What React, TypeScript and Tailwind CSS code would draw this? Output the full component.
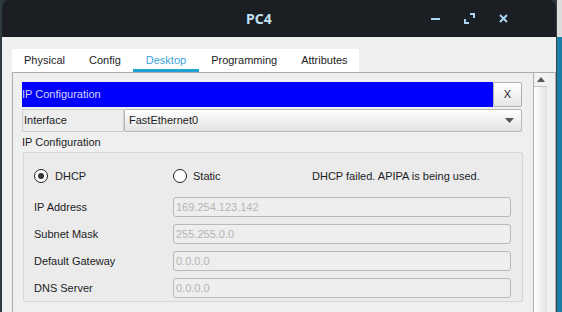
import React from "react";

const font = { fontFamily: '"Liberation Sans", Arial, sans-serif' };

function Radio({ checked }: { checked?: boolean }) {
  return (
    <span className="flex h-[14px] w-[14px] items-center justify-center rounded-full border-[1.5px] border-[#222] bg-white">
      {checked && <span className="h-[6px] w-[6px] rounded-full bg-[#333]" />}
    </span>
  );
}

function Field({ label, value }: { label: string; value: string }) {
  return (
    <div className="flex h-[20px] items-center">
      <div className="w-[149px] pl-[10px] text-[11px] text-[#1c1c24]">{label}</div>
      <div className="flex h-[20px] w-[338px] items-center rounded-[3px] border border-[#b9b9b9] bg-[#eeeeee] pl-[2px] text-[11px] text-[#b5b5b5]">
        {value}
      </div>
    </div>
  );
}

export default function App() {
  const tabs = ["Physical", "Config", "Desktop", "Programming", "Attributes"];
  return (
    <div className="flex h-[312px] w-[562px] overflow-hidden bg-[#2b3439]" style={font}>
      <div className="w-[2px] bg-[#2f3b41]" />
      <div className="flex w-[554px] flex-col">
        {/* title bar */}
        <div className="flex h-[37px] items-center rounded-tl-[8px] rounded-tr-[8px] bg-[#1b1f23]">
          <div
            className="ml-[244px] text-[14px] font-bold text-[#c2e0f4]"
            style={{ fontFamily: '"Noto Sans", "Liberation Sans", sans-serif' }}
          >
            PC4
          </div>
          <div className="ml-[159px] h-[2px] w-[9px] bg-[#a9d6f2]" />
          <svg className="ml-[24px]" width="11" height="11" viewBox="0 0 11 11" fill="none" stroke="#a9d6f2" strokeWidth="2">
            <path d="M6 1h4v4" />
            <path d="M1 6v4h4" />
          </svg>
          <svg className="ml-[24px]" width="9" height="9" viewBox="0 0 9 9" fill="none" stroke="#a9d6f2" strokeWidth="2">
            <path d="M1 1l7 7M8 1l-7 7" />
          </svg>
        </div>
        {/* body */}
        <div className="flex flex-1 flex-col bg-[#efefef] pl-[10px] pt-[12px]">
          <div className="flex h-[23px] w-[347px] bg-white">
            {tabs.map((t) => (
              <div
                key={t}
                className={
                  t === "Desktop"
                    ? "flex items-center border-b-[3px] border-[#1ea0d4] px-[13px] pt-[3px] text-[11px] text-[#3aa2dc]"
                    : "flex items-center px-[12px] text-[11px] text-[#1c1c24]"
                }
              >
                {t}
              </div>
            ))}
          </div>
          <div className="flex flex-1 border border-b-0 border-[#adadad]">
            <div className="flex w-[509px] flex-col pl-[9px] pt-[9px]">
              <div className="flex h-[25px] w-[500px]">
                <div className="flex flex-1 items-center bg-[#0000ff] text-[11px] text-[#d6d6f4]">IP Configuration</div>
                <div className="flex w-[29px] items-center justify-center rounded-[2px] border border-[#b0b0b0] bg-gradient-to-b from-white to-[#e6e6e6] text-[11px] text-[#222]">
                  X
                </div>
              </div>
              <div className="mt-[2px] flex h-[23px] w-[500px]">
                <div className="flex w-[102px] items-center border border-[#cfcfcf] bg-[#eeeeee] pl-[1px] text-[11px] text-[#1c1c24]">
                  Interface
                </div>
                <div className="flex flex-1 items-center justify-between rounded-[2px] border border-[#b8b8b8] bg-gradient-to-b from-white to-[#e3e3e3] pl-[4px] pr-[7px] text-[11px] text-[#1c1c24]">
                  <span>FastEthernet0</span>
                  <svg width="9" height="5" viewBox="0 0 9 5">
                    <path d="M0 0h9L4.5 5z" fill="#555" />
                  </svg>
                </div>
              </div>
              <div className="flex h-[20px] items-center text-[11px] text-[#1c1c24]">IP Configuration</div>
              <div className="ml-[1px] flex h-[150px] w-[500px] flex-col gap-[7px] rounded-[2px] border border-[#d6d6d6] bg-[#ebebeb] pt-[13px]">
                <div className="mb-[4px] flex h-[20px] items-center whitespace-nowrap pl-[10px] text-[11px] text-[#1c1c24]">
                  <div className="flex w-[139px] items-center gap-[7px]">
                    <Radio checked />
                    <span>DHCP</span>
                  </div>
                  <div className="flex w-[139px] items-center gap-[6px]">
                    <Radio />
                    <span>Static</span>
                  </div>
                  <div>DHCP failed. APIPA is being used.</div>
                </div>
                <Field label="IP Address" value="169.254.123.142" />
                <Field label="Subnet Mask" value="255.255.0.0" />
                <Field label="Default Gateway" value="0.0.0.0" />
                <Field label="DNS Server" value="0.0.0.0" />
              </div>
            </div>
            <div className="ml-[11px] flex w-[14px] flex-col border-l border-[#b0b0b0]">
              <div className="flex h-[14px] items-center justify-center border-b border-[#c4c4c4] bg-[#f2f2f2]">
                <svg width="8" height="5" viewBox="0 0 8 5">
                  <path d="M4 0l4 5H0z" fill="#555" />
                </svg>
              </div>
              <div className="flex-1 bg-gradient-to-r from-white to-[#e2e2e2]" />
            </div>
          </div>
        </div>
      </div>
      <div className="flex flex-1 flex-col border-l border-[#3a4247]">
        <div className="h-[37px] bg-[#dcdcdc]" />
        <div className="flex-1 bg-[#1a7ea6]" />
      </div>
    </div>
  );
}
